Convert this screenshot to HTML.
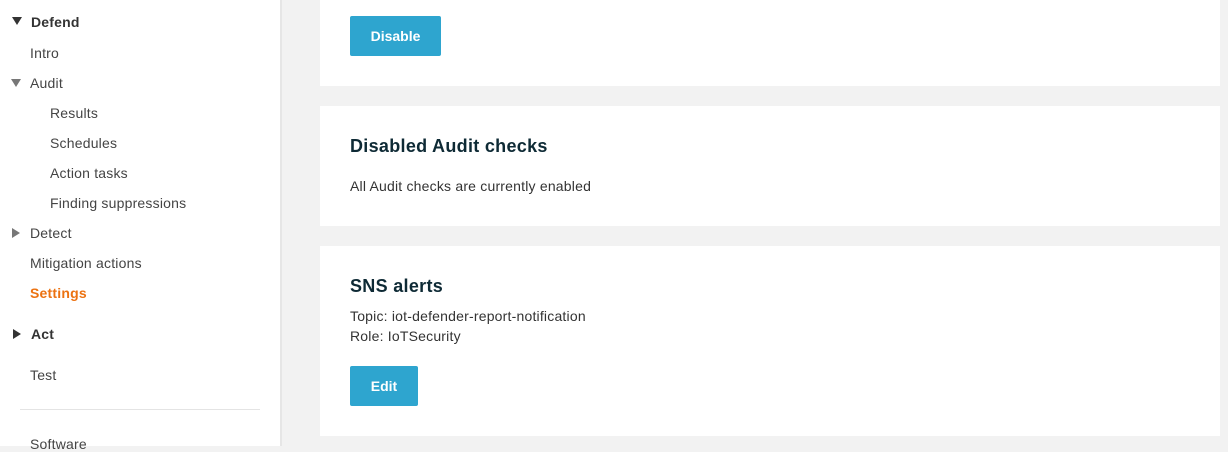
<!DOCTYPE html>
<html><head><style>
*{margin:0;padding:0;box-sizing:border-box}
body{width:1228px;height:446px;overflow:hidden;background:#f2f2f2;font-family:"Liberation Sans",sans-serif;position:relative;color:#16191f}
.side{position:absolute;left:0;top:0;width:282px;height:446px;background:#fff;border-right:2px solid #e6e6e6}
.it{position:absolute;font-size:14px;color:#444;white-space:nowrap;letter-spacing:0.2px}
.b{font-weight:bold;color:#333}
.tri{position:absolute;width:0;height:0}
.card{position:absolute;left:320px;width:900px;background:#fff}
.btn{position:absolute;background:#2ea5cf;color:#fff;font-weight:bold;font-size:14px;text-align:center;line-height:40px;border-radius:2px}
h2{position:absolute;left:30px;font-size:18px;font-weight:bold;color:#0e2a35;letter-spacing:0.3px}
.t{position:absolute;left:30px;font-size:14px;color:#333;letter-spacing:0.2px}
</style></head><body>
<div class="side">
<div class="tri" style="left:12px;top:17px;border-left:5px solid transparent;border-right:5px solid transparent;border-top:8px solid #333"></div>
<div class="it b" style="left:31px;top:14px">Defend</div>
<div class="it" style="left:30px;top:45px">Intro</div>
<div class="tri" style="left:11px;top:79px;border-left:5px solid transparent;border-right:5px solid transparent;border-top:8px solid #777"></div>
<div class="it" style="left:30px;top:75px">Audit</div>
<div class="it" style="left:50px;top:105px">Results</div>
<div class="it" style="left:50px;top:135px">Schedules</div>
<div class="it" style="left:50px;top:165px">Action tasks</div>
<div class="it" style="left:50px;top:195px">Finding suppressions</div>
<div class="tri" style="left:12px;top:228px;border-top:5px solid transparent;border-bottom:5px solid transparent;border-left:8px solid #777"></div>
<div class="it" style="left:30px;top:225px">Detect</div>
<div class="it" style="left:30px;top:255px">Mitigation actions</div>
<div class="it b" style="left:30px;top:285px;color:#ec7211">Settings</div>
<div class="tri" style="left:13px;top:329px;border-top:5px solid transparent;border-bottom:5px solid transparent;border-left:8px solid #333"></div>
<div class="it b" style="left:31px;top:326px">Act</div>
<div class="it" style="left:30px;top:367px">Test</div>
<div style="position:absolute;left:20px;top:409px;width:240px;height:1px;background:#e4e4e4"></div>
<div class="it" style="left:30px;top:436px">Software</div>
</div>
<div class="card" style="top:0;height:86px"><div class="btn" style="left:30px;top:16px;width:91px">Disable</div></div>
<div class="card" style="top:106px;height:120px"><h2 style="top:30px">Disabled Audit checks</h2><div class="t" style="top:72px">All Audit checks are currently enabled</div></div>
<div class="card" style="top:246px;height:190px"><h2 style="top:30px">SNS alerts</h2><div class="t" style="top:62px">Topic: iot-defender-report-notification</div><div class="t" style="top:82px">Role: IoTSecurity</div><div class="btn" style="left:30px;top:120px;width:68px">Edit</div></div>
</body></html>
